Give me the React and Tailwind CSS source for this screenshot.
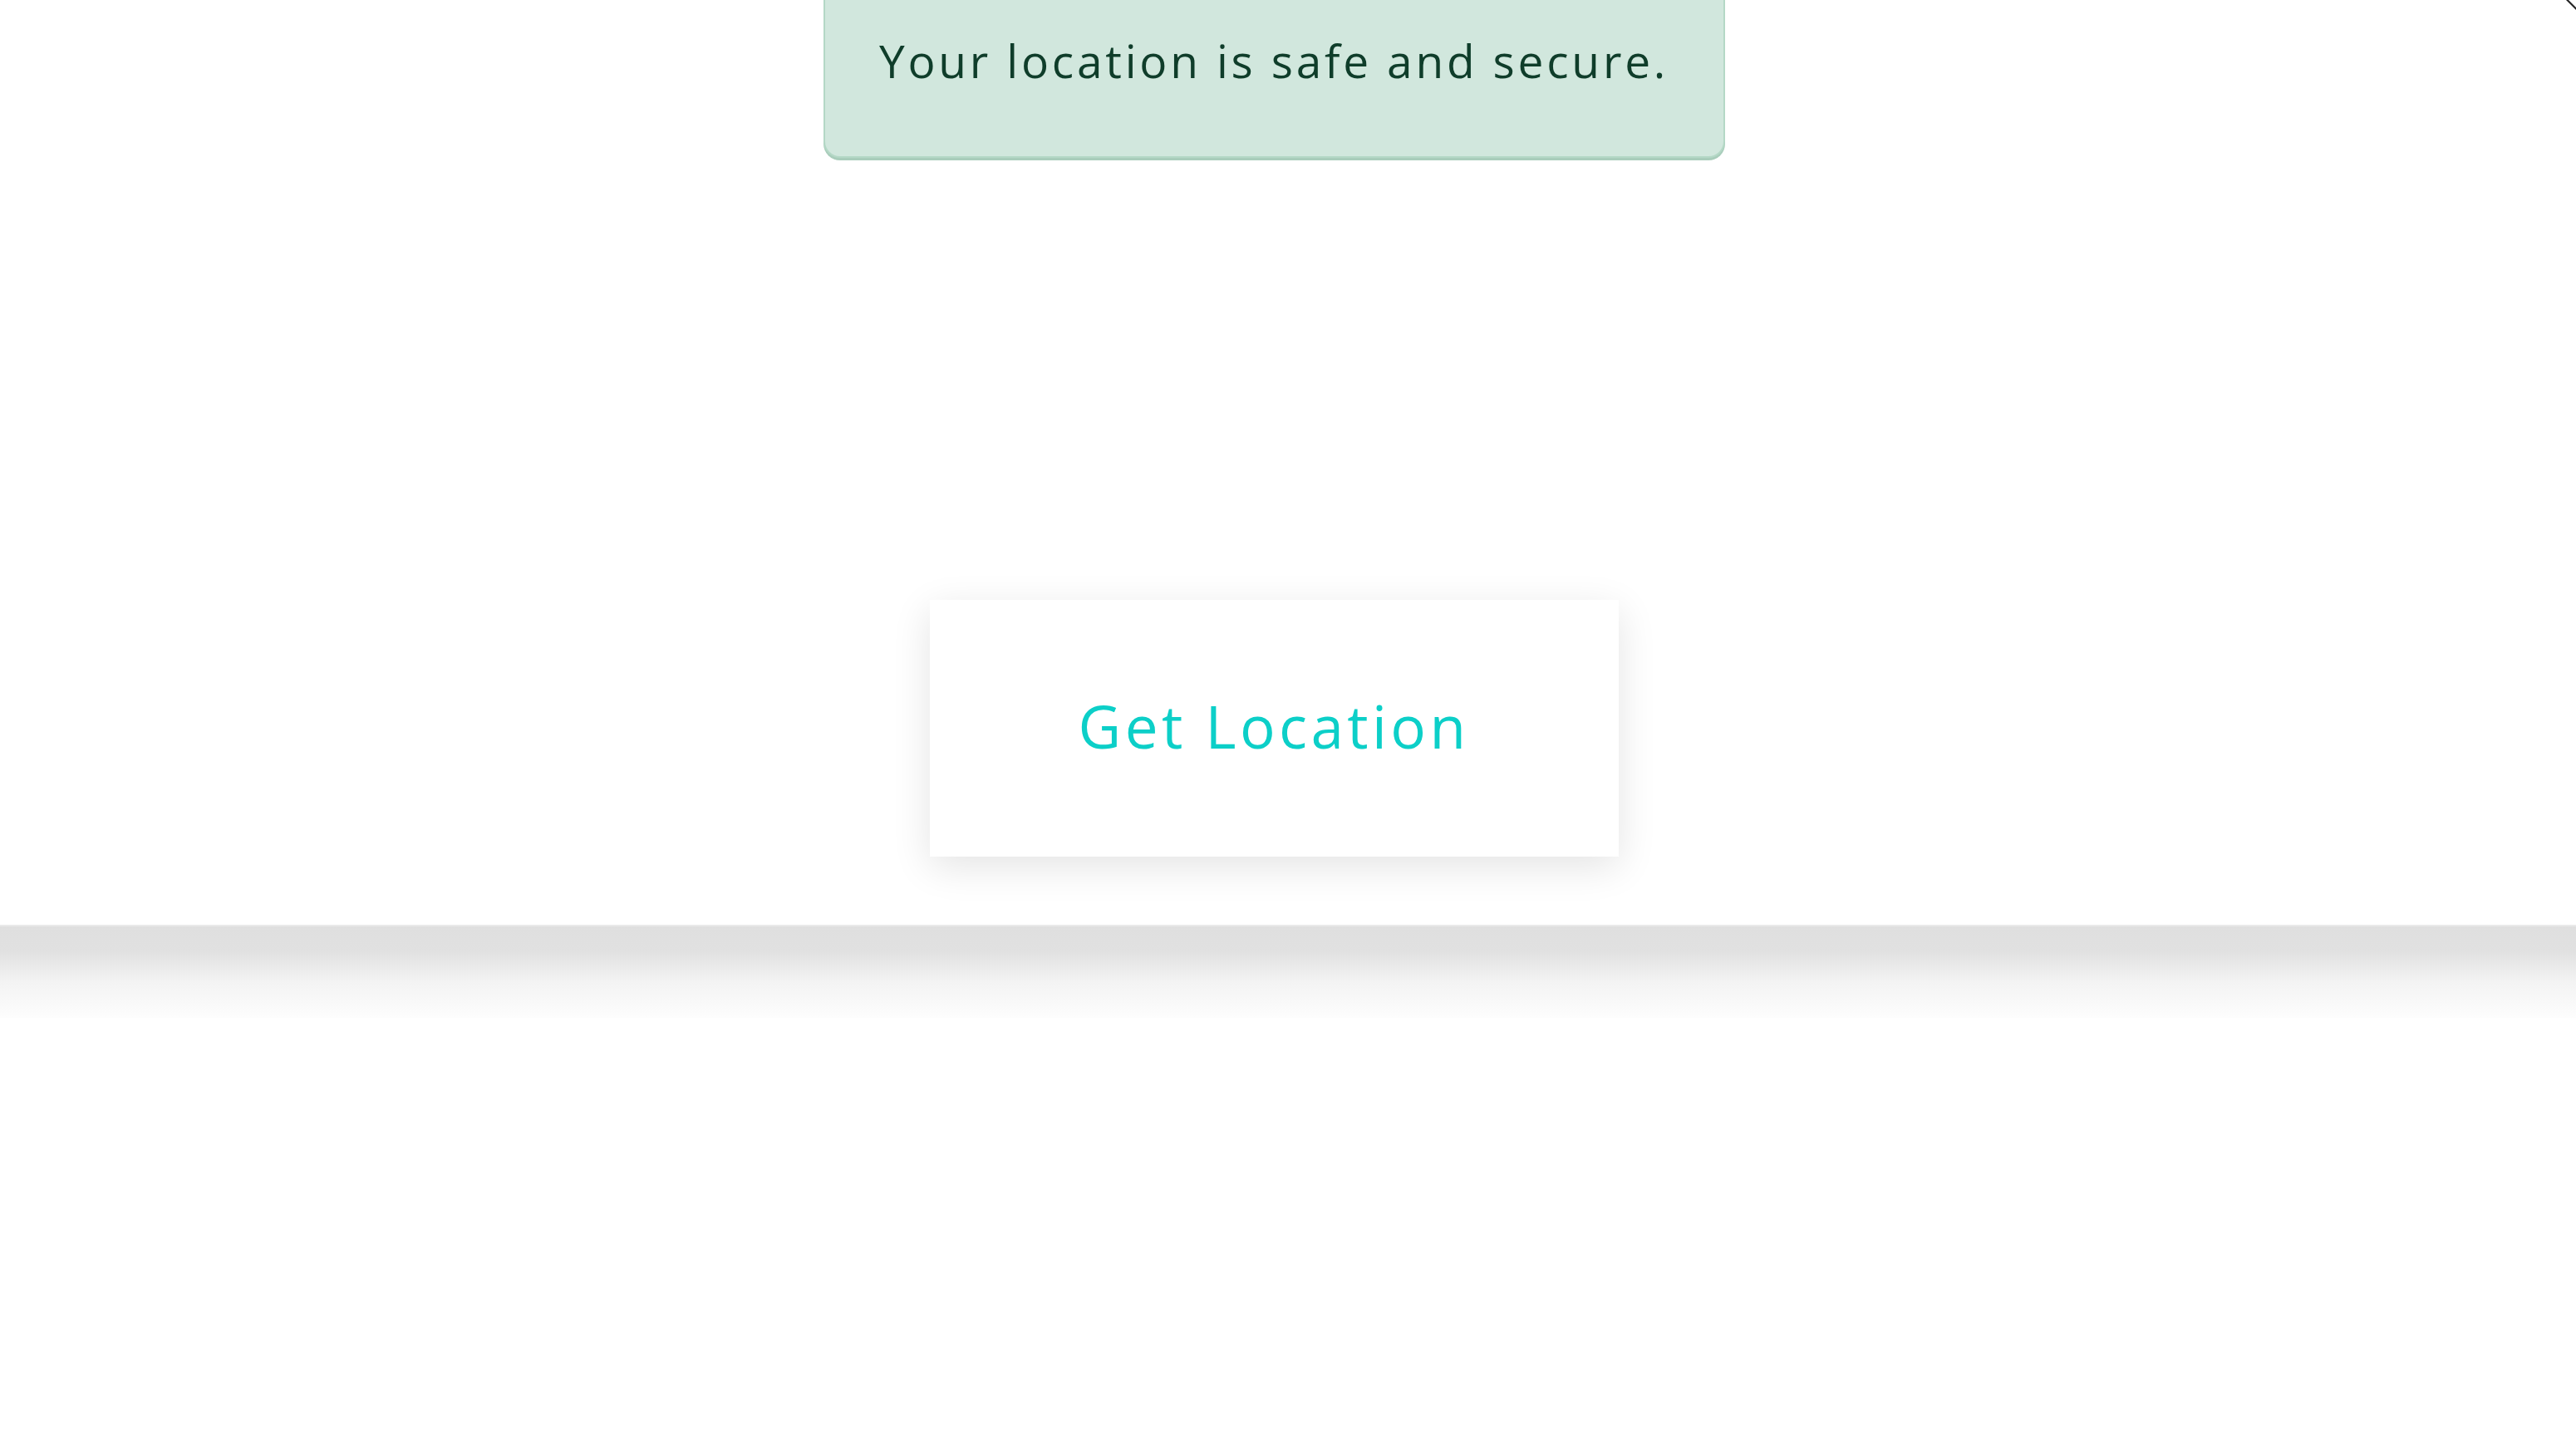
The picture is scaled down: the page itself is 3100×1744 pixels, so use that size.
export default function App() {
  return (
    <div className="relative min-h-[1744px] overflow-hidden bg-white font-['Open_Sans',sans-serif]">
      <section className="flex h-[1113px] flex-col items-center pr-[34px]">
        <div className="-mt-[36px] w-[1085px] rounded-[20px] border-2 border-[#b4d8c6] bg-[#d1e7dd] pt-[66px] pb-[73px] text-center shadow-[0_3px_0_#a9cdbb]">
          <p className="text-[55px] leading-[1.5] tracking-[3.8px] text-[#0f3d2a]">Your location is safe and secure.</p>
        </div>

        <button className="mt-[532px] flex h-[309px] w-[829px] items-center justify-center bg-white pb-[6px] shadow-[0_12px_44px_rgba(0,0,0,0.11)]">
          <span className="text-[71px] leading-none tracking-[4.4px] text-[#0ccfc8]">Get Location</span>
        </button>
      </section>

      <div className="h-[112px] border-t-2 border-[#e9e9e9] bg-[linear-gradient(to_bottom,#dfdfdf_0%,#e1e1e1_28%,#f3f3f3_60%,#fdfdfd_100%)]" />

      <svg className="absolute right-0 top-0" width="12" height="12" viewBox="0 0 12 12">
        <path d="M3 0 L12 9 L12 12 L0 0 Z" fill="#222" />
      </svg>
    </div>
  );
}
